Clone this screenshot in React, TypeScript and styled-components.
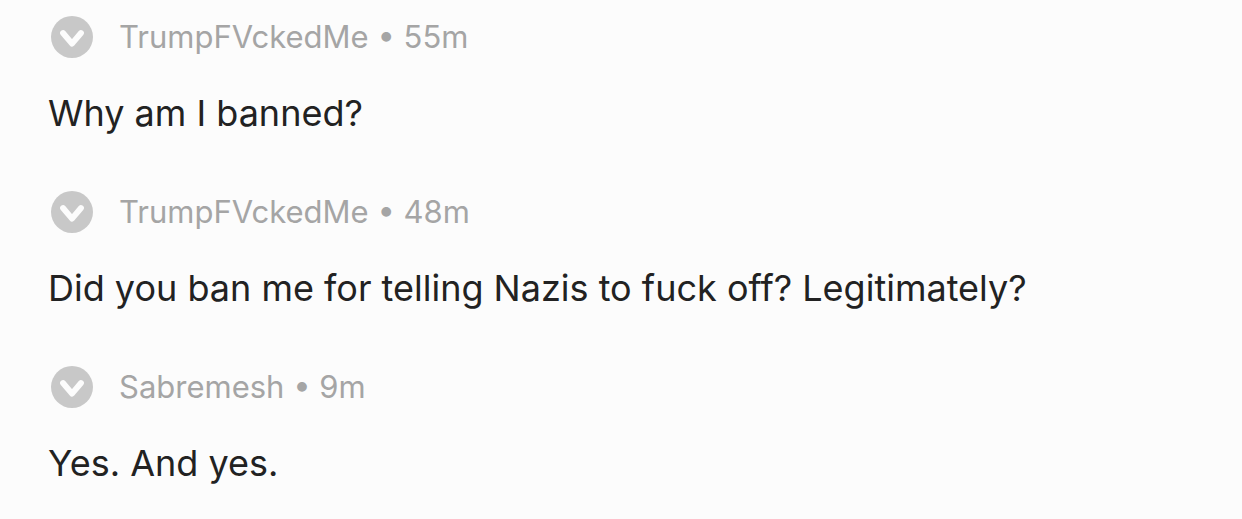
import React from "react";
import styled, { createGlobalStyle } from "styled-components";

const GlobalStyle = createGlobalStyle`
  body {
    margin: 0;
    background: #fcfcfc;
    font-family: Inter, "Liberation Sans", sans-serif;
  }
`;

const Thread = styled.main`
  padding: 12px 48px 0;
`;

const Comment = styled.article`
  padding-bottom: 50px;

  &:last-child {
    padding-bottom: 28px;
  }
`;

const Header = styled.header`
  display: flex;
  align-items: center;
  gap: 26px;
  height: 50px;
`;

const CollapseButton = styled.button`
  width: 42px;
  height: 42px;
  margin: 0 0 0 3px;
  padding: 0;
  border: 0;
  border-radius: 50%;
  background: #c8c8c8;
  cursor: pointer;

  svg {
    display: block;
  }
`;

const Meta = styled.span`
  color: #a5a5a5;
  font-size: 31px;
  line-height: 40px;
`;

const Body = styled.p`
  margin: 27px 0 0;
  color: #222;
  font-size: 36px;
  line-height: 48px;
`;

const comments = [
  { author: "TrumpFVckedMe", age: "55m", text: "Why am I banned?" },
  {
    author: "TrumpFVckedMe",
    age: "48m",
    text: "Did you ban me for telling Nazis to fuck off? Legitimately?",
  },
  { author: "Sabremesh", age: "9m", text: "Yes. And yes." },
];

export default function App() {
  return (
    <>
      <GlobalStyle />
      <Thread>
        {comments.map((c) => (
          <Comment key={c.age}>
            <Header>
              <CollapseButton type="button" aria-label="Collapse comment">
                <svg width="42" height="42" viewBox="0 0 42 42" fill="none">
                  <path
                    d="M12 17 L21 27.6 L30 17"
                    stroke="#fcfcfc"
                    strokeWidth="5.8"
                    strokeLinecap="round"
                    strokeLinejoin="round"
                  />
                </svg>
              </CollapseButton>
              <Meta>
                {c.author} • {c.age}
              </Meta>
            </Header>
            <Body>{c.text}</Body>
          </Comment>
        ))}
      </Thread>
    </>
  );
}
